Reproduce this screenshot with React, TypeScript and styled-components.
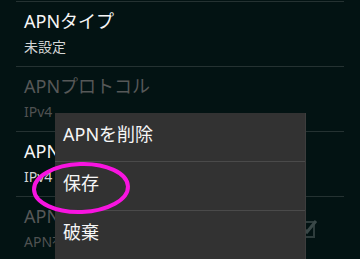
import styled, { createGlobalStyle } from 'styled-components'

const GlobalStyle = createGlobalStyle`
  html, body {
    margin: 0;
    padding: 0;
    background: #031313;
  }
  body {
    font-family: 'Noto Sans', 'Noto Sans CJK JP', sans-serif;
  }
`

const S = {
  Screen: styled.div`
    position: relative;
    width: 360px;
    height: 259px;
    overflow: hidden;
    background: #031313;
  `,
  List: styled.div`
    padding-top: 1px;
    display: flex;
    flex-direction: column;
  `,
  Row: styled.div`
    margin: 0 16px;
    height: 65px;
    box-sizing: border-box;
    border-top: 1px solid #253232;
    padding: 7px 8px 0;
    display: flex;
    align-items: flex-start;
  `,
  RowText: styled.div`
    flex: 1;
    display: flex;
    flex-direction: column;
    gap: 4px;
  `,
  Title: styled.div<{ $disabled?: boolean }>`
    font-size: 18px;
    line-height: 24px;
    color: ${({ $disabled }) => ($disabled ? '#565858' : '#f6f6f6')};
    white-space: nowrap;
  `,
  Summary: styled.div<{ $disabled?: boolean }>`
    font-size: 14px;
    line-height: 20px;
    color: ${({ $disabled }) => ($disabled ? '#505252' : '#d4d6d6')};
    white-space: nowrap;
  `,
  Check: styled.svg`
    width: 24px;
    height: 24px;
    margin-top: 14px;
    margin-right: 16px;
    flex-shrink: 0;
  `,
  Menu: styled.div`
    position: absolute;
    left: 55px;
    top: 113px;
    width: 250px;
    height: 160px;
    background: #323232;
    box-shadow: 1px 0 0 #3d3d3d;
    display: flex;
    flex-direction: column;
  `,
  MenuItem: styled.div`
    height: 48px;
    box-sizing: border-box;
    padding: 0 8px 5px;
    line-height: 43px;
    font-size: 18px;
    color: #f6f6f6;
    & + & {
      height: 49px;
      border-top: 1px solid #4a4a4a;
    }
  `,
  Mark: styled.svg`
    position: absolute;
    left: 30px;
    top: 160px;
    width: 104px;
    height: 56px;
    overflow: visible;
  `,
}

type Pref = { title: string; summary: string; disabled?: boolean; checkbox?: boolean }

const prefs: Pref[] = [
  { title: 'APNタイプ', summary: '未設定' },
  { title: 'APNプロトコル', summary: 'IPv4', disabled: true },
  { title: 'APNローミングプロトコル', summary: 'IPv4' },
  { title: 'APNの有効/無効', summary: 'APN有効', disabled: true, checkbox: true },
]

const menuItems = ['APNを削除', '保存', '破棄']

export default function App() {
  return (
    <>
      <GlobalStyle />
      <S.Screen>
        <S.List>
          {prefs.map((p) => (
            <S.Row key={p.title}>
              <S.RowText>
                <S.Title $disabled={p.disabled}>{p.title}</S.Title>
                <S.Summary $disabled={p.disabled}>{p.summary}</S.Summary>
              </S.RowText>
              {p.checkbox && (
                <S.Check viewBox="0 0 24 24">
                  <rect x="3" y="4" width="15" height="15" fill="none" stroke="#2e3c3c" strokeWidth="2" />
                  <path d="M7 10 L11 14 L20 3" fill="none" stroke="#3a4848" strokeWidth="3" />
                </S.Check>
              )}
            </S.Row>
          ))}
        </S.List>
        <S.Menu>
          {menuItems.map((m) => (
            <S.MenuItem key={m}>{m}</S.MenuItem>
          ))}
        </S.Menu>
        <S.Mark viewBox="0 0 104 56">
          <ellipse cx="51" cy="28" rx="47" ry="24" fill="none" stroke="#f814e0" strokeWidth="4" transform="rotate(-2 51 28)" />
        </S.Mark>
      </S.Screen>
    </>
  )
}
